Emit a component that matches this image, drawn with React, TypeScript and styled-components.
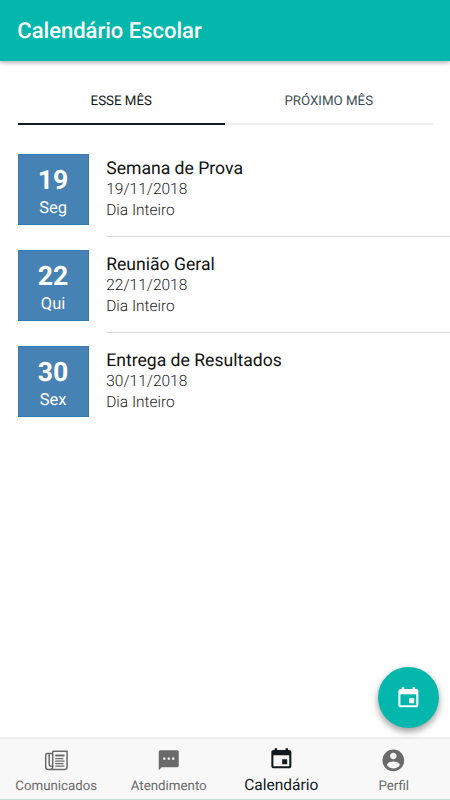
import React from "react";
import styled, { createGlobalStyle } from "styled-components";

const GlobalStyle = createGlobalStyle`
  * { box-sizing: border-box; }
  body { margin: 0; background: #fff; font-family: Roboto, "Noto Sans", sans-serif; text-rendering: geometricPrecision; }
`;

const Screen = styled.div`
  position: relative;
  width: 450px;
  height: 800px;
  display: flex;
  flex-direction: column;
  overflow: hidden;
  background: #fff;
`;

const Header = styled.header`
  height: 61px;
  flex: none;
  padding: 2px 0 0 17.3px;
  display: flex;
  align-items: center;
  background: #04b7ac;
  box-shadow: 0 1px 5px rgba(0, 0, 0, 0.4);
`;

const Title = styled.h1`
  margin: 0;
  font-size: 22px;
  line-height: 28px;
  font-weight: 500;
  color: #fff;
`;

const Tabs = styled.nav`
  display: flex;
  flex: none;
  margin: 18px 17.5px 0;
`;

const Tab = styled.button<{ $active?: boolean }>`
  flex: 1;
  height: 46px;
  padding: 0;
  border: 0;
  border-bottom: 2px solid ${(p) => (p.$active ? "#101c1f" : "#ededed")};
  background: none;
  font: 400 13.3px/42px Roboto, sans-serif;
  padding-top: 1.6px;
  color: ${(p) => (p.$active ? "#10191b" : "#3d4e53")};
  text-rendering: inherit;
`;

const EventList = styled.main`
  flex: 1;
  padding: 16.5px 0 0 17.6px;
`;

const EventRow = styled.article`
  display: flex;
  height: 96.1px;
  gap: 17.6px;
`;

const DateTile = styled.div`
  width: 71px;
  height: 71px;
  flex: none;
  margin-top: 12.5px;
  display: flex;
  flex-direction: column;
  align-items: center;
  background: #4682b4;
  border: 1px solid #327cb5;
  color: #fff;
`;

const Day = styled.strong`
  margin-top: 10px;
  font-size: 26.6px;
  line-height: 32px;
  font-weight: 700;
`;

const Weekday = styled.span`
  font-size: 16.5px;
  line-height: 24px;
`;

const Details = styled.div<{ $last?: boolean }>`
  flex: 1;
  height: 95.3px;
  padding-top: 16px;
  border-bottom: 1px solid ${(p) => (p.$last ? "transparent" : "#dadada")};
`;

const EventName = styled.h2`
  margin: 0;
  font-size: 17.6px;
  line-height: 22px;
  font-weight: 400;
  color: #111;
`;

const Meta = styled.p`
  margin: 0;
  position: static;
  font-size: 15.5px;
  line-height: 21px;
  font-weight: 300;
  color: #222;

  h2 + & {
    margin-top: -0.7px;
  }
`;

const Fab = styled.button`
  position: absolute;
  right: 11px;
  bottom: 72.5px;
  width: 61px;
  height: 61px;
  padding: 0 0 1px;
  border: 0;
  border-radius: 50%;
  display: flex;
  align-items: center;
  justify-content: center;
  background: #04b7ac;
  color: #fff;
  box-shadow: 0 4px 6px rgba(0, 0, 0, 0.28), 0 2px 8px rgba(0, 0, 0, 0.14);
`;

const TabBar = styled.nav`
  height: 63px;
  flex: none;
  display: flex;
  background: #f8f8f8;
  border-top: 2px solid #ececec;
  border-bottom: 1px solid #c5ddd6;
`;

const BarItem = styled.button<{ $active?: boolean }>`
  flex: 1;
  padding: ${(p) => (p.$active ? "6px" : "8px")} 0 0;
  border: 0;
  display: flex;
  flex-direction: column;
  align-items: center;
  background: none;
  font: 400 ${(p) => (p.$active ? "15.5px" : "13.3px")} / 18px Roboto, sans-serif;
  color: ${(p) => (p.$active ? "#10191b" : "#6a6a6a")};
  text-rendering: inherit;
`;

const BarLabel = styled.span<{ $active?: boolean }>`
  margin-top: 5px;
`;

const Glyph = styled.svg`
  width: 26.7px;
  height: 26.7px;
  flex: none;
  margin: 0 0 -1px;
  fill: currentColor;
`;

const CalendarIcon = () => (
  <Glyph viewBox="0 0 512 512">
    <path d="M368 272h-96v96h96v-96zM336 64v32H176V64h-48v32h-24c-22 0-40 18-40 40v272c0 22 18 40 40 40h304c22 0 40-18 40-40V136c0-22-18-40-40-40h-24V64h-48zm72 344H104V196h304v212z" />
  </Glyph>
);

const NewsIcon = () => (
  <Glyph viewBox="0 0 26.7 26.7">
    <g fill="none" stroke="currentColor" strokeWidth="1.5" strokeLinejoin="round">
      <path d="M9.7 4.2h14.4v15.8c0 1.5-.9 2.4-2.4 2.4H5.2c-1.6 0-2.5-.9-2.5-2.5V8.2c0-1 .6-1.7 1.6-1.7h5.4" />
      <path d="M9.7 4.2V20c0 1.4-.8 2.3-2 2.3" />
      <path d="M6.2 6.8v10.8c0 1 .7 1.6 1.5 1.6h1.5" />
    </g>
    <path d="M12.3 7.4h9.2v2.2h-9.2zM12.3 11.1h8.2v1.2h-8.2zM12.3 13.4h9.2v1.3h-9.2zM12.3 16h8.2v1.2h-8.2zM12.3 18.5h9.2v1.3h-9.2z" />
  </Glyph>
);

const ChatIcon = () => (
  <Glyph viewBox="-8 0 512 512">
    <path
      fillRule="evenodd"
      d="M416 64H96c-18 0-32 14-32 32v352l56-60h296c18 0 32-14 32-32V96c0-18-14-32-32-32zM150 203h42v42h-42zM235 203h42v42h-42zM320 203h42v42h-42z"
    />
  </Glyph>
);

const ProfileIcon = () => (
  <Glyph viewBox="0 0 512 512">
    <path
      fillRule="evenodd"
      d="M256 48C141 48 48 141 48 256s93 208 208 208 208-93 208-208S371 48 256 48zm0 62c35 0 63 28 63 63s-28 63-63 63-63-28-63-63 28-63 63-63zm0 302c-52 0-98-27-125-67 1-42 83-65 125-65s124 23 125 65c-27 40-73 67-125 67z"
    />
  </Glyph>
);

const events = [
  { day: "19", weekday: "Seg", name: "Semana de Prova", date: "19/11/2018" },
  { day: "22", weekday: "Qui", name: "Reunião Geral", date: "22/11/2018" },
  { day: "30", weekday: "Sex", name: "Entrega de Resultados", date: "30/11/2018" },
];

const sections = [
  { label: "Comunicados", Icon: NewsIcon },
  { label: "Atendimento", Icon: ChatIcon },
  { label: "Calendário", Icon: CalendarIcon, active: true },
  { label: "Perfil", Icon: ProfileIcon },
];

export default function App() {
  return (
    <Screen>
      <GlobalStyle />
      <Header>
        <Title>Calendário Escolar</Title>
      </Header>
      <Tabs>
        <Tab $active>ESSE MÊS</Tab>
        <Tab>PRÓXIMO MÊS</Tab>
      </Tabs>
      <EventList>
        {events.map((event, index) => (
          <EventRow key={event.day}>
            <DateTile>
              <Day>{event.day}</Day>
              <Weekday>{event.weekday}</Weekday>
            </DateTile>
            <Details $last={index === events.length - 1}>
              <EventName>{event.name}</EventName>
              <Meta>{event.date}</Meta>
              <Meta>Dia Inteiro</Meta>
            </Details>
          </EventRow>
        ))}
      </EventList>
      <Fab aria-label="Calendário">
        <CalendarIcon />
      </Fab>
      <TabBar>
        {sections.map(({ label, Icon, active }) => (
          <BarItem key={label} $active={active}>
            <Icon />
            <BarLabel>{label}</BarLabel>
          </BarItem>
        ))}
      </TabBar>
    </Screen>
  );
}
